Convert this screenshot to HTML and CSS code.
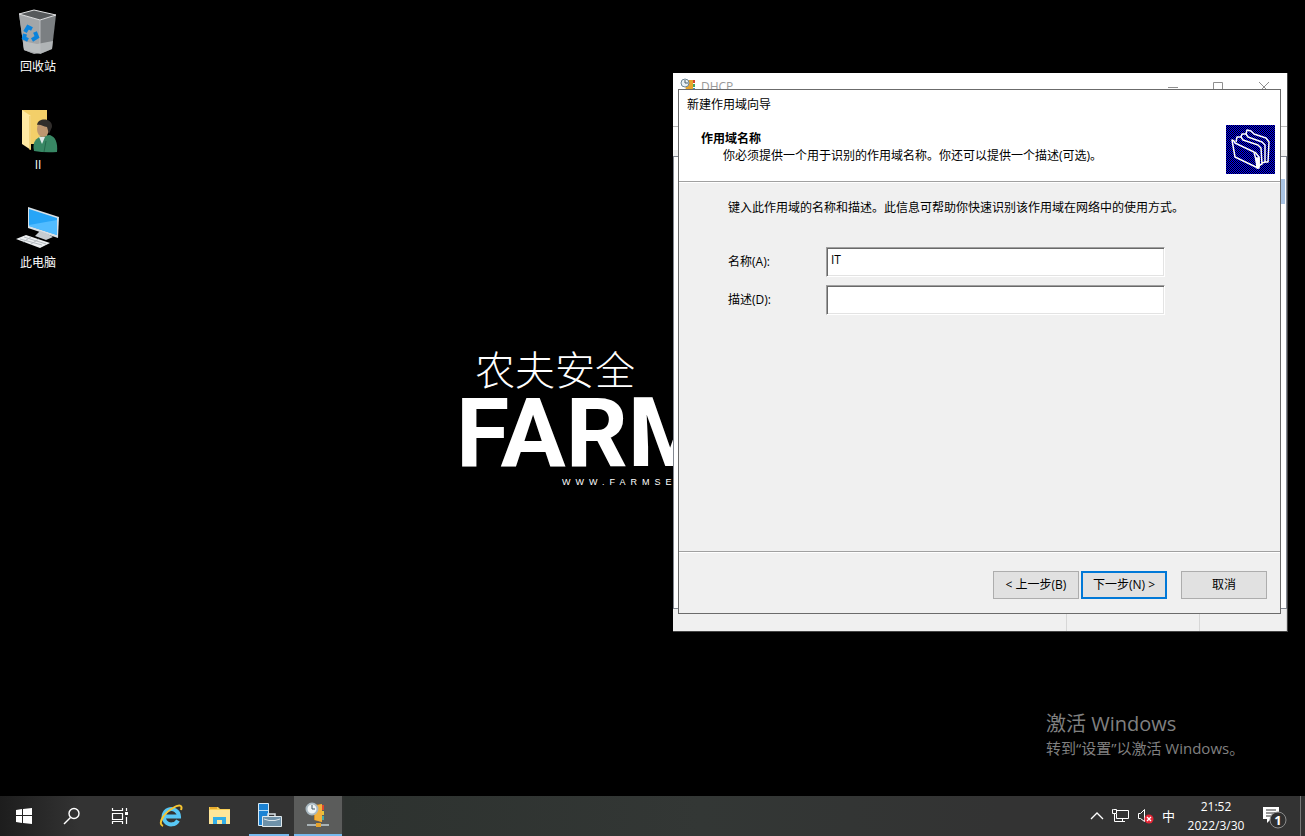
FILE: index.html
```html
<!DOCTYPE html>
<html lang="zh-CN">
<head>
<meta charset="utf-8">
<title>新建作用域向导</title>
<link rel="stylesheet" href="styles.css">
</head>
<body>
<main class="desktop">
  <nav class="shortcuts">
    <a class="shortcut" href="#recycle">
      <svg width="48" height="48" viewBox="2 0 48 48">
        <path d="M7 4 22 10 20 43 12 40Z" fill="#8d9092"/><path d="M7 4 28 10 28 43 22 44 12 40Z" fill="#a3a6a8"/>
        <path d="M28 10 44 5 40 39 28 44Z" fill="#7b7f82"/><path d="M11 31 25 34 41 31 40 39 28 44 12 40Z" fill="#c2c5c7" opacity=".75"/>
        <path d="M7 4 22 0 44 5 28 10Z" fill="#56595b" stroke="#e2e3e4" stroke-width="1"/>
        <path d="M28 10 28 42" stroke="#b9bcbe" stroke-width="1"/>
        <g fill="none" stroke="#0a83dc" stroke-width="4"><path d="M13 22 16 17 20 19"/><path d="M23 22 25 27 20 30"/><path d="M16 30 12 28 13 24"/></g>
      </svg>
      <span>回收站</span>
    </a>
    <a class="shortcut" href="#user">
      <svg width="48" height="48" viewBox="2 0 48 48">
        <path d="M10 2H35V36H10Z" fill="#f3cf69"/><path d="M10 2 19 8V42L10 36Z" fill="#ffe9a2"/><path d="M18 8V42" stroke="#e7bd52"/>
        <path d="M22 43C20 34 24 30 30 28L38 27C43 29 46 34 45 44Q33 45 22 43Z" fill="#388764"/><path d="M27 29 30 36 33 29Z" fill="#dce8e8"/><path d="M34 33 32 44" stroke="#23684b"/>
        <ellipse cx="31" cy="21" rx="6" ry="8" fill="#bd9670"/><path d="M25 17C26 9 41 10 40 19L37 26 35 19C31 19 29 16 25 17Z" fill="#302d2b"/>
      </svg>
      <span>II</span>
    </a>
    <a class="shortcut" href="#computer">
      <svg width="48" height="48" viewBox="2 0 48 48">
        <path d="M16 1 47 11 46 32 16 22Z" fill="#d9e0e5"/><path d="M17 3 45 12V29L17 20Z" fill="#27a5f7"/><path d="M17 19 45 14V29L17 20Z" fill="#52bcff"/>
        <path d="M28 25 36 28 41 31 34 34 23 30Z" fill="#c6ccd1"/><path d="M4 33 14 29 38 37 28 42Z" fill="#edf0f2"/><path d="M8 33 30 39M12 31 34 38M11 36 19 31M19 38 27 33" stroke="#b5bbc0" stroke-width="1"/>
      </svg>
      <span>此电脑</span>
    </a>
  </nav>

  <div class="wallpaper">
    <div class="brand-cn">农夫安全</div>
    <div class="brand-en">FARM</div>
    <div class="brand-url">WWW.FARMSEC</div>
  </div>

  <section class="console">
    <header class="console-title">
      <svg class="console-icon" width="16" height="16" viewBox="0 0 16 16"><path d="M5 2H13V15H6Z" fill="#e7a52e"/><path d="M13 2h2v3h-2z" fill="#d9442f"/><path d="M13 6h2v3h-2z" fill="#46a35e"/><path d="M13 10h2v3h-2z" fill="#3b89c9"/><circle cx="5" cy="5" r="4" fill="#e9f1f6" stroke="#6f8796"/><path d="M5 2V5H8" fill="none" stroke="#4b5c66"/></svg>
      <span class="console-name">DHCP</span>
      <svg class="caption" width="104" height="12" viewBox="0 0 104 12"><path d="M0 6.500H10M45.500 1.500H54.500V10.500H45.500ZM91 1 101 11M101 1 91 11" fill="none" stroke="#8f8f8f"/></svg>
    </header>
    <div class="console-menu"></div>
    <div class="console-tools"></div>
    <div class="console-body"><div class="console-selected"></div></div>
    <footer class="console-status"><span></span><span></span><span></span></footer>
  </section>

  <form class="wizard">
    <header class="wizard-head">
      <div class="wizard-title">新建作用域向导</div>
      <div class="wizard-intro">
        <div class="wizard-copy">
          <h1>作用域名称</h1>
          <p>你必须提供一个用于识别的作用域名称。你还可以提供一个描述(可选)。</p>
        </div>
        <svg class="folders" width="49" height="49" viewBox="0 0 49 49">
          <defs><pattern id="dots" width="2" height="2" patternUnits="userSpaceOnUse"><path d="M0 0H2V2H0Z" fill="#000"/><path d="M0 0H1V1H0ZM1 1H2V2H1Z" fill="#00f"/></pattern></defs>
          <path d="M0 0H49V49H0Z" fill="url(#dots)"/>
          <g fill="none" stroke="#fff" stroke-width="1.500" stroke-linejoin="round"><path d="M6 15 8 16 9 18 28 27 32 43 9 32Z"/><path d="M10 17 11 12 15 12 17 15 32 20 35 23 36 39 32 41"/><path d="M15 12 16 9 20 9 22 12 36 17 39 20 39 37 36 38"/><path d="M20 9 21 5 25 6 28 9 40 13 43 17 42 37 39 37"/><path d="M29 27 33 32V42"/><path d="M30 33H33V43H31Z" fill="#fff"/></g>
        </svg>
      </div>
    </header>
    <div class="wizard-body">
      <p class="hint">键入此作用域的名称和描述。此信息可帮助你快速识别该作用域在网络中的使用方式。</p>
      <div class="field"><label for="name">名称(A):</label><input id="name" type="text" value="IT"></div>
      <div class="field"><label for="desc">描述(D):</label><input id="desc" type="text"></div>
    </div>
    <footer class="wizard-foot">
      <button type="button">&lt; 上一步(B)</button>
      <button type="button" class="primary">下一步(N) &gt;</button>
      <button type="button" class="cancel">取消</button>
    </footer>
  </form>

  <aside class="activate">
    <div class="activate-title">激活 Windows</div>
    <div class="activate-text">转到“设置”以激活 Windows。</div>
  </aside>
</main>

<footer class="taskbar">
  <button class="task" aria-label="开始"><svg width="16" height="16" viewBox="0 0 16 16" fill="#fff"><path d="M0 2 6 1V7H0ZM7 1 16 0V7H7ZM0 8H6V15L0 14ZM7 8H16V16L7 15Z"/></svg></button>
  <button class="task" aria-label="搜索"><svg width="18" height="18" viewBox="0 0 18 18" fill="none" stroke="#fff" stroke-width="1.400"><circle cx="11" cy="6.500" r="5"/><path d="M7.500 10.500 1 17"/></svg></button>
  <button class="task" aria-label="任务视图"><svg width="18" height="18" viewBox="0 0 18 18" fill="none" stroke="#fff" stroke-width="1.200"><path d="M1.500 1V3.500H11.500V1M1.500 6.500H11.500V12.500H1.500ZM1.500 17V14.500H11.500V17M15.500 1V4M15.500 10V17"/><path d="M14 5H17V8H14Z" fill="#fff" stroke="none"/></svg></button>
  <div class="pinned">
    <button class="task" aria-label="Internet Explorer"><svg width="24" height="24" viewBox="0 0 24 24" fill="none"><path d="M19 16.500A7.700 7.700 0 1 1 20 12.500H6" stroke="#58c7f5" stroke-width="4"/><path d="M4 22C-2 20 5 9 14 4 20 0 24 1 22 6" stroke="#f7c531" stroke-width="2"/></svg></button>
    <button class="task" aria-label="文件资源管理器"><svg width="24" height="22" viewBox="0 0 24 22"><path d="M1 2H10L12 4H22V19H1Z" fill="#f8cf58"/><path d="M1 5H22V19H1Z" fill="#ffe69a"/><path d="M2 2H9V4H2Z" fill="#e8ab2c"/><path d="M5 19V12H18V19H14V15H9V19Z" fill="#33aee8"/></svg></button>
    <button class="task open" aria-label="服务器管理器"><svg width="26" height="26" viewBox="0 0 26 26"><path d="M2.500 1.500H12.500V23.500H2.500Z" fill="#1c83d4" stroke="#d6e9f5"/><path d="M3 8.500H12" stroke="#b6dbf5"/><path d="M12 14V12H19V14" fill="none" stroke="#d9e1e6" stroke-width="1.500"/><path d="M6.500 14.500H25.500V24.500H6.500Z" fill="#6e91a9" stroke="#e1e9ed"/><path d="M8 17 13 18.500H19L24 17" fill="none" stroke="#dce5ea"/></svg></button>
    <button class="task active" aria-label="DHCP"><svg width="26" height="26" viewBox="0 0 26 26"><path d="M9 3 17 2V20L9 18Z" fill="#d98c1f"/><path d="M10 4 17 2V20L10 18Z" fill="#f3b13c"/><path d="M17 3h2v5h-2z" fill="#dc4930"/><path d="M17 9h2v4h-2z" fill="#e4c43a"/><path d="M17 14h2v4h-2z" fill="#48a9a6"/><path d="M2 23H24" stroke="#a8b2b6" stroke-width="2"/><path d="M11 21H16V25H11Z" fill="#e6a32c"/><circle cx="7" cy="7" r="5.500" fill="#f1f5f7" stroke="#a8b8c1" stroke-width="2"/><path d="M7 3V7H10" fill="none" stroke="#405865"/></svg></button>
  </div>
  <div class="tray">
    <svg width="14" height="10" viewBox="0 0 14 10" fill="none" stroke="#fff" stroke-width="1.300"><path d="M1 8 7 2 13 8"/></svg>
    <svg width="17" height="16" viewBox="0 0 17 16" fill="none" stroke="#fff"><path d="M4.500 2.500H16.500V10.500H4.500V6M1.500 1.500H4.500V5.500H.5V1.500ZM2.500 6V13.500H13M10.500 11V13"/></svg>
    <svg width="17" height="16" viewBox="0 0 17 16" fill="none" stroke="#fff"><path d="M1.500 5.500H3.500L7.500 1.500V13.500L3.500 10.500H1.500Z"/><circle cx="12" cy="11" r="4.500" fill="#e32636" stroke="none"/><path d="M10 9 14 13M14 9 10 13" stroke-width="1.300"/></svg>
    <span class="ime">中</span>
    <div class="clock"><time>21:52</time><time>2022/3/30</time></div>
    <button class="notice" aria-label="通知"><svg width="26" height="26" viewBox="0 0 26 26"><path d="M1 4H17V16H9L5 20V16H1Z" fill="#fff"/><path d="M4 7H14M4 10H14M4 13H10" stroke="#333"/><circle cx="16" cy="17" r="8" fill="#303030" stroke="#8c8c8c"/><text x="16" y="22" text-anchor="middle" class="badge">1</text></svg></button>
    <i class="peek"></i>
  </div>
</footer>
</body>
</html>
```
FILE: styles.css
```css
* { box-sizing: border-box; }
body {
  margin: 0;
  height: 100vh;
  display: flex;
  flex-direction: column;
  overflow: hidden;
  background: #000;
  color: #000;
  font: 12px/18px "Open Sans", "Noto Sans CJK SC", sans-serif;
}
h1, p { margin: 0; }
button, input { font: inherit; color: inherit; }
svg { display: block; flex: none; }
.desktop { position: relative; flex: 1; overflow: hidden; }

.shortcuts { display: flex; flex-direction: column; gap: 32px; width: 76px; padding-top: 10px; }
.shortcut {
  display: flex;
  flex-direction: column;
  align-items: center;
  color: #fff;
  text-decoration: none;
}
.shortcut svg { overflow: visible; }

.wallpaper { position: absolute; left: 456px; top: 346px; color: #fff; white-space: nowrap; }
.brand-cn { padding-left: 19px; font-size: 40px; line-height: 48px; font-weight: 300; }
.brand-en { font: 700 97px/78px "Liberation Sans Narrow", Roboto, sans-serif; }
.brand-url { padding: 2px 0 0 106px; font: 9px/16px "Liberation Sans", sans-serif; letter-spacing: 5px; }

.console {
  position: absolute;
  left: 673px;
  top: 73px;
  width: 615px;
  height: 559px;
  display: flex;
  flex-direction: column;
  background: #fff;
  border-right: 1px solid #444;
  border-bottom: 1px solid #444;
}
.console-title { display: flex; align-items: center; gap: 5px; height: 28px; padding: 0 15px 0 7px; color: #999; }
.console-icon { margin-bottom: 2px; }
.caption { margin-left: auto; }
.console-menu { height: 26px; border-bottom: 1px solid #bbb; }
.console-tools { height: 29px; border-bottom: 6px solid #f0f0f0; }
.console-body { flex: 1; border: 1px solid #828790; padding: 22px 1px 0; }
.console-selected { width: 5px; height: 25px; margin-left: auto; background: #a9c4e4; }
.console-status { display: flex; height: 22px; background: #f0f0f0; }
.console-status span { flex: 0 0 133px; border-right: 1px solid #d7d7d7; }
.console-status span:first-child { flex: 1; }
.console-status span:last-child { flex-basis: 87px; }

.wizard {
  position: absolute;
  left: 678px;
  top: 89px;
  width: 603px;
  height: 525px;
  display: flex;
  flex-direction: column;
  background: #f0f0f0;
  border: 1px solid #6b6b6b;
}
.wizard-head { background: #fff; border-bottom: 1px solid #a0a0a0; height: 92px; }
.wizard-title { padding: 6px 8px 0; }
.wizard-intro { display: flex; justify-content: space-between; padding: 11px 5px 0 22px; }
.wizard-copy { padding-top: 5px; }
.wizard-copy h1 { font-size: 12px; line-height: 17px; font-weight: 700; }
.wizard-copy p { padding-left: 22px; line-height: 17px; }
.wizard-body { flex: 1; padding: 16px 115px 0 49px; border-top: 1px solid #fff; }
.hint { white-space: nowrap; margin-bottom: 30px; }
.field { display: flex; align-items: center; margin-bottom: 8px; }
.field label { width: 98px; }
.field input {
  flex: 1;
  min-width: 0;
  height: 30px;
  padding: 0 4px 6px;
  border: 1px solid;
  border-color: #a0a0a0 #fff #fff #a0a0a0;
  border-radius: 0;
  background: #fff;
  box-shadow: inset 1px 1px #696969, inset -1px -1px #e3e3e3;
  outline: 0;
}
.wizard-foot {
  display: flex;
  justify-content: flex-end;
  gap: 2px;
  height: 62px;
  padding: 19px 13px 0;
  border-top: 1px solid #a0a0a0;
  box-shadow: inset 0 1px #fff;
}
.wizard-foot button { width: 86px; height: 28px; padding: 0; border: 1px solid #adadad; background: #e1e1e1; }
.wizard-foot .primary { border: 2px solid #0078d7; }
.wizard-foot .cancel { margin-left: 12px; }

.activate { position: absolute; right: 57px; bottom: 37px; width: 202px; color: #808080; white-space: nowrap; }
.activate-title { font-size: 20px; line-height: 26px; }
.activate-text { font-size: 15px; line-height: 22px; }

.taskbar {
  flex: none;
  display: flex;
  height: 40px;
  background: linear-gradient(90deg, #1d1d1d, #333 80px, #333 340px, #2d322f 345px, #333735 700px, #333 1000px);
}
.task { display: grid; place-items: center; width: 48px; height: 40px; padding: 0; border: 0; background: none; }
.pinned { display: flex; gap: 1px; padding-left: 3px; }
.open { width: 40px; margin: 0 4px; border-bottom: 2px solid #76b9ed; }
.active { background: #5b5c5b; border-bottom: 2px solid #76b9ed; }
.tray { display: flex; align-items: center; gap: 8px; margin-left: auto; color: #fff; }
.ime { font-size: 13px; }
.clock { display: flex; flex-direction: column; align-items: center; width: 66px; line-height: 19px; }
.notice { padding: 0; border: 0; background: none; margin: 0 4px 0 5px; }
.badge { fill: #fff; font: 700 13px "Open Sans", sans-serif; }
.peek { width: 5px; height: 40px; border-left: 1px solid #777; }
```
